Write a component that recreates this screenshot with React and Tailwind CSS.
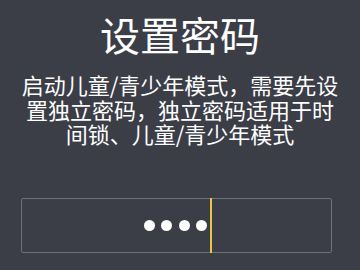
export default function App() {
  return (
    <div
      className="w-[360px] h-[270px] bg-[#3b3d47] flex flex-col items-center overflow-hidden text-white"
      style={{ fontFamily: '"Noto Sans CJK SC", "Noto Sans", sans-serif' }}
    >
      <h1 className="mt-[14px] text-[40px] leading-[40px] font-normal">设置密码</h1>
      <p className="mt-[18px] w-[320px] text-center text-[22px] leading-[24.5px] font-normal">
        启动儿童/青少年模式，需要先设置独立密码，独立密码适用于时间锁、儿童/青少年模式
      </p>
      <div className="mt-[52px] self-start ml-[21px] w-[311px] h-[55px] border-[1.5px] border-[#6f717a] rounded-[2px] flex justify-center items-center">
        <div className="flex items-center gap-[6.3px] ml-[3px]">
          <div className="w-[11px] h-[11px] rounded-full bg-white" />
          <div className="w-[11px] h-[11px] rounded-full bg-white" />
          <div className="w-[11px] h-[11px] rounded-full bg-white" />
          <div className="w-[11px] h-[11px] rounded-full bg-white" />
        </div>
        <div className="ml-[3px] w-[2px] h-[55px] bg-[#e8c64a]" />
      </div>
    </div>
  );
}
